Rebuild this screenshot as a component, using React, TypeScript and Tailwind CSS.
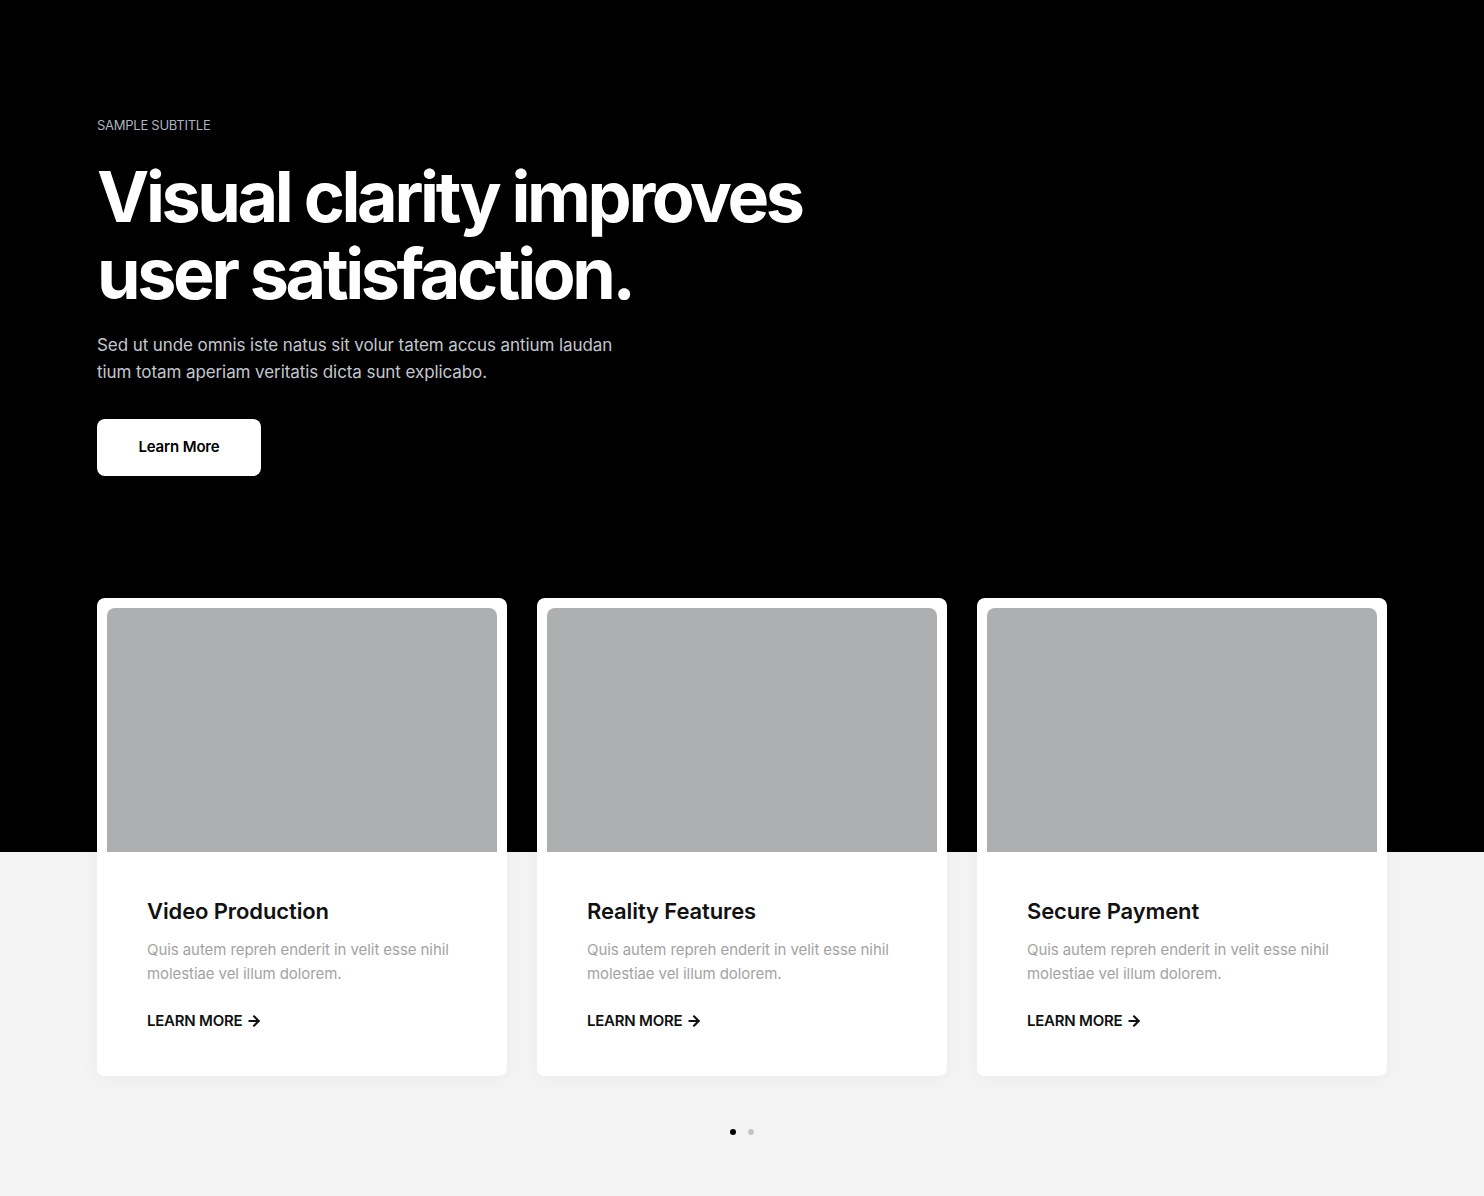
import { ArrowRight } from "lucide-react";

const cards = [
  { title: "Video Production" },
  { title: "Reality Features" },
  { title: "Secure Payment" },
];

export default function App() {
  return (
    <main
      className="min-h-[1196px] w-full bg-[linear-gradient(to_bottom,#000_852px,#f4f4f4_852px)] font-['Inter','Noto_Sans',sans-serif]"
    >
      <div className="mx-auto w-[1290px] pt-[115px] pb-[110px]">
        {/* hero */}
        <section>
          <p className="text-[13px] leading-[20px] uppercase text-[#aab2c0] tracking-[-0.02em]">Sample Subtitle</p>
          <h1 className="mt-[23px] text-[70px] leading-[77px] font-bold tracking-[-0.048em] text-white">
            Visual clarity improves
            <br />
            user satisfaction.
          </h1>
          <p className="mt-[20px] w-[536px] text-[17px] leading-[27px] text-[#c3c7cf] tracking-[-0.005em]">
            Sed ut unde omnis iste natus sit volur tatem accus antium laudan tium totam aperiam veritatis dicta sunt explicabo.
          </p>
          <button className="mt-[33px] flex h-[57px] w-[164px] items-center justify-center rounded-[8px] bg-white text-[15px] font-semibold tracking-[-0.01em] text-black">
            Learn More
          </button>
        </section>

        {/* cards */}
        <section className="mt-[122px] grid grid-cols-3 gap-[30px]">
          {cards.map((c) => (
            <div key={c.title} className="rounded-[8px] bg-white p-[10px] shadow-[0_4px_24px_rgba(0,0,0,0.04)]">
              <div className="h-[244px] rounded-t-[8px] bg-[#aeafb1]" />
              <div className="px-[40px] pt-[44px] pb-[35px]">
                <h3 className="text-[22px] leading-[30px] font-semibold tracking-[-0.005em] text-[#111]">{c.title}</h3>
                <p className="mt-[12px] text-[15px] leading-[24px] text-[#a3a3a3] tracking-[-0.005em]">
                  Quis autem repreh enderit in velit esse nihil molestiae vel illum dolorem.
                </p>
                <a href="#" className="mt-[25px] flex items-center gap-[4px] text-[15px] leading-[20px] font-semibold uppercase tracking-[-0.015em] text-[#111]">
                  Learn More
                  <ArrowRight className="h-[16px] w-[16px]" strokeWidth={3.2} />
                </a>
              </div>
            </div>
          ))}
        </section>

        {/* dots */}
        <div className="mt-[53px] flex justify-center gap-[12px]">
          <span className="h-[6px] w-[6px] rounded-full bg-black" />
          <span className="h-[6px] w-[6px] rounded-full bg-[#c4c4c4]" />
        </div>
      </div>
    </main>
  );
}
